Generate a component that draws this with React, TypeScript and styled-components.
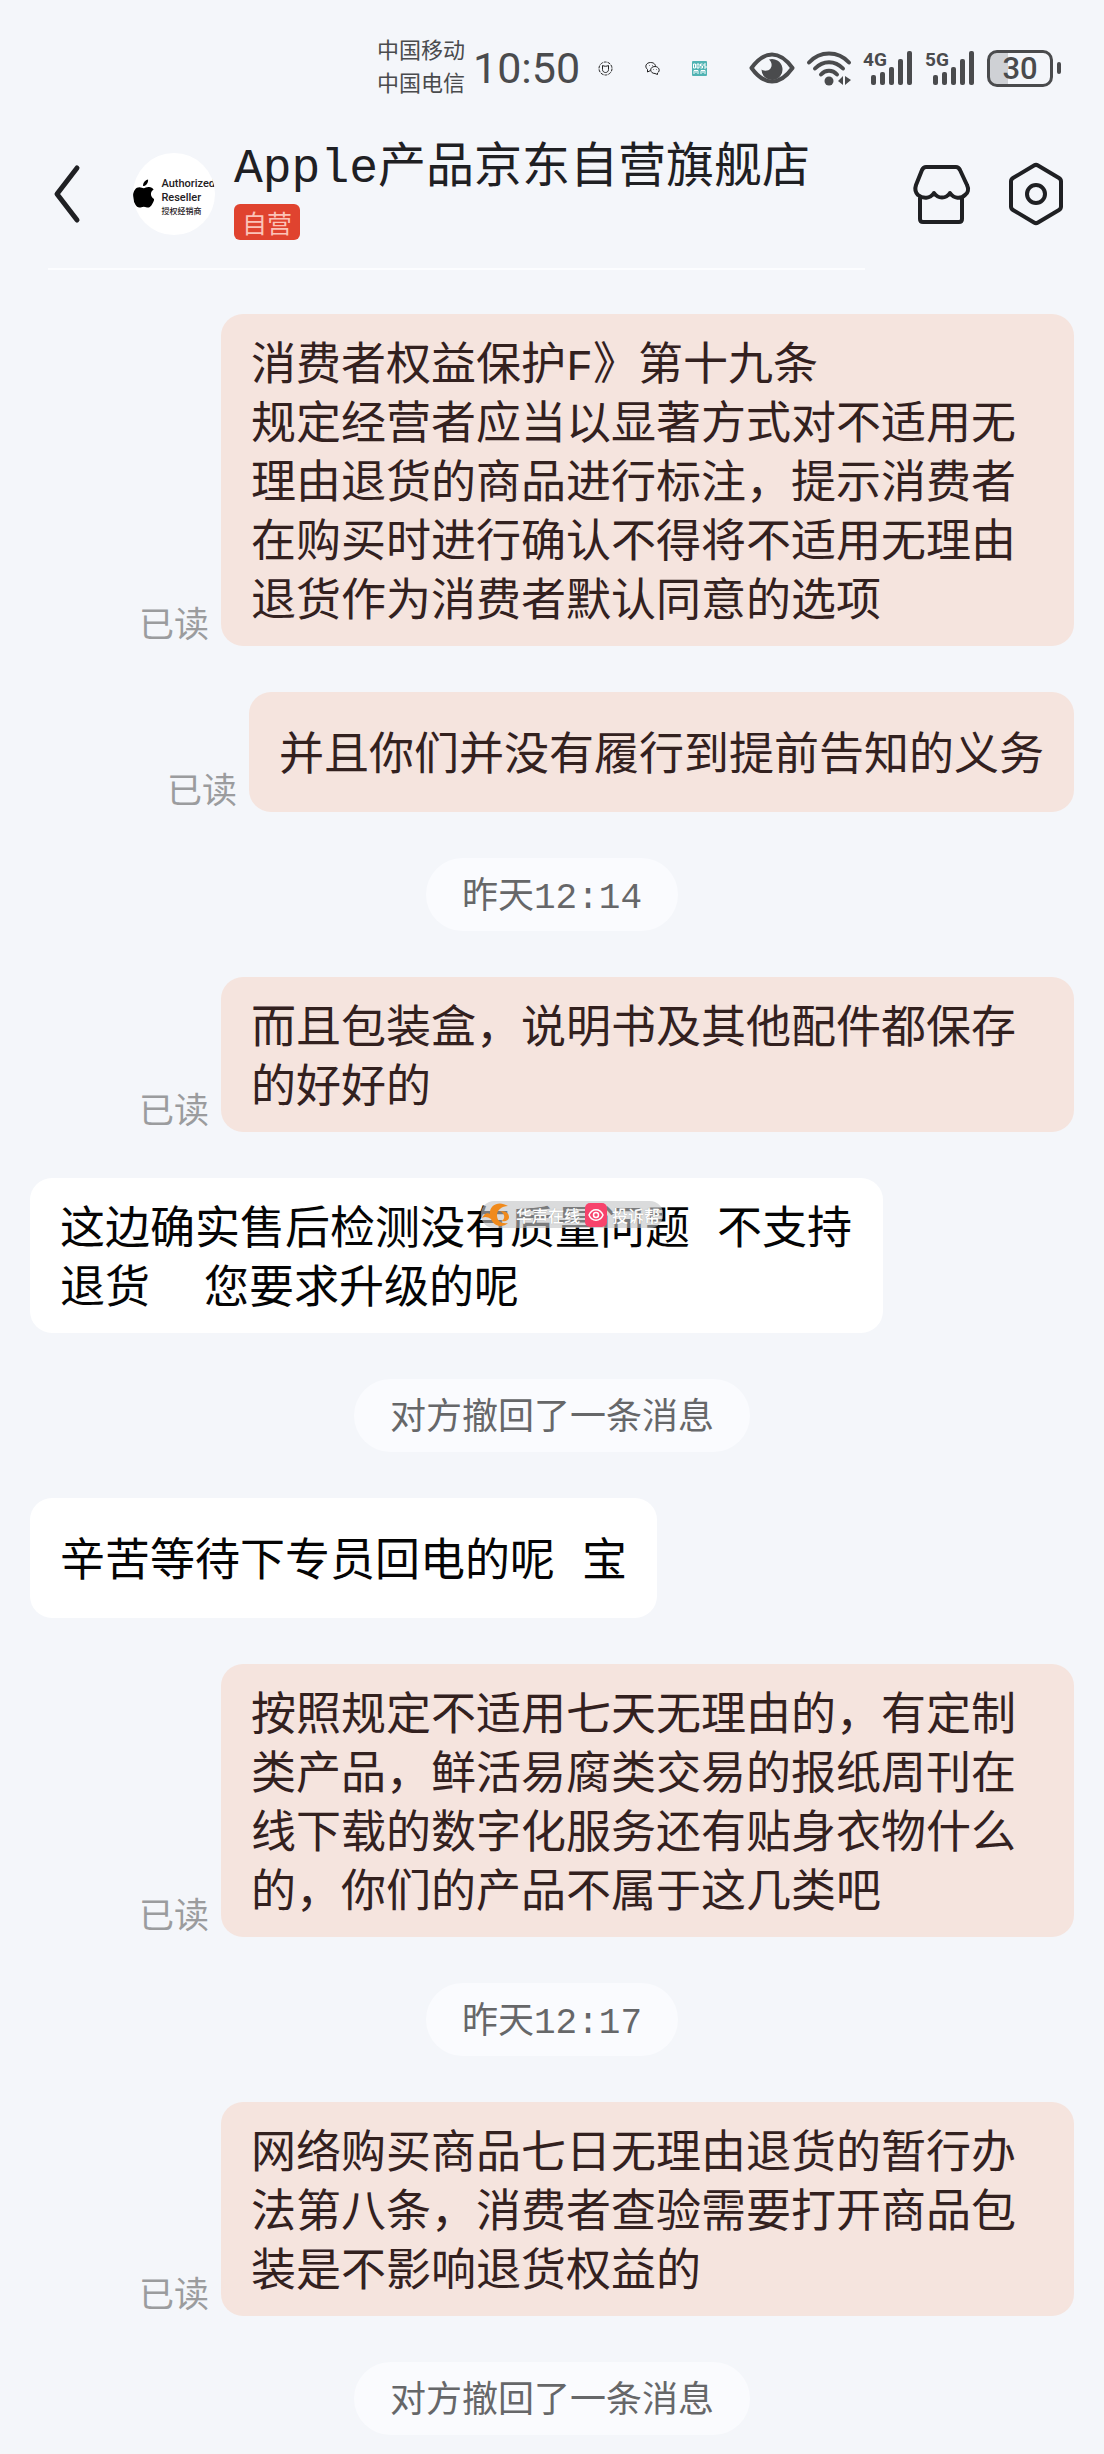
import React from "react";
import styled, { createGlobalStyle } from "styled-components";

const GlobalStyle = createGlobalStyle`
  *, *::before, *::after { box-sizing: border-box; }
  body {
    margin: 0;
    background: #f4f6fa;
    color: #1f2023;
    font-family: "Liberation Mono", "Noto Sans CJK SC", monospace;
  }
`;

const Page = styled.div`
  width: 100%;
  overflow: hidden;
`;

/* ---------- status bar ---------- */

const StatusBar = styled.div`
  display: flex;
  align-items: center;
  justify-content: flex-end;
  height: 120px;
  padding: 16px 43px 0 0;
  color: #4a4b4d;
`;

const Carriers = styled.div`
  display: flex;
  flex-direction: column;
  padding-bottom: 6px;
  font-family: "Noto Sans CJK SC", sans-serif;
  font-size: 22px;
  line-height: 33px;
  white-space: nowrap;
`;

const Clock = styled.time`
  margin-left: 8px;
  width: 108px;
  font-family: Roboto, sans-serif;
  font-size: 43px;
  font-weight: 400;
  line-height: 48px;
`;

const Notices = styled.div`
  display: flex;
  align-items: center;
  gap: 32px;
  margin: 0 42px 0 17px;
`;

const Indicators = styled.div`
  display: flex;
  align-items: center;
  gap: 11px;
`;

const SignalIcon = styled.svg`
  overflow: visible;
`;

const BatteryWrap = styled.div`
  display: flex;
  align-items: center;
  gap: 4px;
`;

const BatteryBody = styled.div`
  display: flex;
  align-items: center;
  justify-content: center;
  width: 66px;
  height: 37px;
  border: 3px solid #4a4b4d;
  border-radius: 10px;
  background: linear-gradient(90deg, #cfd1d5 30%, transparent 30%);
  font-family: Roboto, sans-serif;
  font-size: 31px;
  font-weight: 500;
  line-height: 31px;
`;

const BatteryTip = styled.span`
  width: 4px;
  height: 12px;
  border-radius: 2px;
  background: #4a4b4d;
`;

/* ---------- header ---------- */

const Header = styled.header`
  display: flex;
  align-items: center;
  height: 148px;
  padding: 0 41px 0 52px;
`;

const IconButton = styled.button`
  display: flex;
  padding: 0;
  border: 0;
  background: none;
  color: #1f2023;
  cursor: pointer;
`;

const Avatar = styled.div`
  display: flex;
  flex: none;
  align-items: center;
  gap: 7px;
  width: 82px;
  height: 82px;
  margin-left: 51px;
  border-radius: 50%;
  background: #fff;
  overflow: hidden;
`;

const AvatarText = styled.div`
  padding-top: 8px;
  font-family: Roboto, "Noto Sans CJK SC", sans-serif;
  font-size: 11px;
  font-weight: 500;
  line-height: 14px;
  white-space: nowrap;
`;

const AvatarNote = styled.div`
  font-size: 8px;
`;

const Shop = styled.div`
  display: flex;
  flex: 1;
  flex-direction: column;
  align-items: flex-start;
  gap: 7px;
  min-width: 0;
  padding: 0 0 14px 19px;
`;

const ShopName = styled.h1`
  margin: 0;
  padding-top: 7px;
  font-size: 48px;
  font-weight: 400;
  line-height: 56px;
  white-space: nowrap;
`;

const ShopBadge = styled.span`
  padding: 1px 8px 0;
  border-radius: 6px;
  background: #e0432f;
  color: #fbc3b8;
  font-family: "Noto Sans CJK SC", sans-serif;
  font-size: 25px;
  line-height: 35px;
`;

const Actions = styled.div`
  display: flex;
  align-items: center;
  gap: 38px;
`;

const Divider = styled.div`
  width: 74%;
  height: 2px;
  margin-left: 48px;
  background: #fcfdff;
`;

/* ---------- chat ---------- */

const Chat = styled.main`
  display: flex;
  flex-direction: column;
  gap: 46px;
  padding: 44px 30px 15px;
`;

const Row = styled.div<{ $sent?: boolean }>`
  display: flex;
  align-items: flex-end;
  justify-content: ${(p) => (p.$sent ? "flex-end" : "flex-start")};
  gap: 12px;
`;

const Bubble = styled.div<{ $sent?: boolean }>`
  position: relative;
  display: flex;
  align-items: center;
  max-width: 853px;
  min-width: 0;
  min-height: 120px;
  padding: 25px 30px 12px;
  border-radius: 22px;
  background: ${(p) => (p.$sent ? "#f5e4de" : "#ffffff")};
  color: ${(p) => (p.$sent ? "#33211f" : "#050505")};
  font-size: 45px;
  line-height: 59px;
`;

const BubbleText = styled.p`
  margin: 0;
  white-space: pre-wrap;
`;

const ReadMark = styled.span`
  flex: none;
  color: #9b9c9e;
  font-size: 35px;
  line-height: 36px;
`;

const Notice = styled.div`
  align-self: center;
  padding: 8px 36px 0;
  border-radius: 37px;
  background: #fafbfe;
  color: #666769;
  font-size: 36px;
  line-height: 65px;
`;

const Stamp = styled.div`
  position: absolute;
  top: 23px;
  left: 451px;
  display: flex;
  align-items: center;
  gap: 5px;
  height: 27px;
  padding: 0 3px 0 1px;
  border-radius: 13px;
  background: rgba(196, 197, 199, 0.62);
  color: #fff;
  font-family: "Noto Sans CJK SC", sans-serif;
  font-size: 16px;
  font-weight: 500;
  line-height: 18px;
  text-shadow: 0 0 1px #999;
  white-space: nowrap;
`;

const INK = "#4a4b4d";

function Signal({ label }: { label: string }) {
  const tops = [24, 21, 16, 8, 0];
  return (
    <SignalIcon width="51" height="34" viewBox="0 0 51 34" role="img" aria-label={label}>
      <text x="0" y="15" fontFamily="Roboto, sans-serif" fontWeight="700" fontSize="19" fill={INK}>
        {label}
      </text>
      {tops.map((top, i) => (
        <rect key={top} x={8 + i * 9} y={top} width="5" height={34 - top} rx="2" fill={INK} />
      ))}
    </SignalIcon>
  );
}

function Eye() {
  return (
    <svg width="46" height="32" viewBox="0 0 46 32" aria-hidden="true">
      <path d="M2.500 16C9 7 15.500 2.500 23 2.500S37 7 43.500 16C37 25 30.500 29.500 23 29.500S9 25 2.500 16Z" fill="none" stroke={INK} strokeWidth="4" strokeLinejoin="round" />
      <path d="M20 7.500a10.500 10.500 0 1 1-7.500 10c3 2 7 1.500 9-1 2-2.700 1.300-6.500-1.500-9Z" fill={INK} />
    </svg>
  );
}

function Wifi() {
  return (
    <svg width="46" height="35" viewBox="0 0 46 35" aria-hidden="true">
      <g fill="none" stroke={INK} strokeWidth="4" strokeLinecap="round">
        <path d="M3 11.500C14-.5 32-.5 43 11.500" />
        <path d="M9 17.500c8-8.500 20-8.500 28 0" />
        <path d="M15 23.500c4.500-5 11.500-5 16 0" />
      </g>
      <circle cx="23" cy="30" r="4.500" fill={INK} />
      <path d="M37 25v9l-5-4ZM39 25v9l6-5Z" fill={INK} />
    </svg>
  );
}

function RingNotice() {
  return (
    <svg width="15" height="15" viewBox="0 0 15 15" fill="none" stroke="#222" aria-hidden="true">
      <circle cx="7.500" cy="7.500" r="6.500" strokeDasharray="3 1" />
      <path d="M4.500 4.500v4c0 4 6 4 6 0v-4M4.500 4.500c2 1 4 1 6 0" />
    </svg>
  );
}

function ChatNotice() {
  return (
    <svg width="15" height="15" viewBox="0 0 15 15" fill="none" stroke="#222" aria-hidden="true">
      <path d="M5.500 9.500 2.500 11V8.500C-1 5.500 1.500 1.500 5.500 1.500s5 2.500 5 4" />
      <path d="M10 5.500c-6 0-5.500 7 0 7l2.500 1v-1.500c3.500-2.500 1-6.500-2.500-6.500Z" />
      <path d="M4 4.500h.5M7 4.500h.5M8.500 8.500h.5M11 8.500h.5" />
    </svg>
  );
}

function JobNotice() {
  return (
    <svg width="15" height="15" viewBox="0 0 15 15" aria-hidden="true">
      <rect width="15" height="15" rx="1" fill="#50b3b3" />
      <path d="M1.500 3h2v4h-2zM5 3h2v4H5zM10.500 3h-2v2h2v2h-2M14 3h-2v2h2v2h-2M2 13V9.500h4V13M9 13V9.500h4V13M4 9v3M11 9v3" fill="none" stroke="#fff" />
    </svg>
  );
}

function BackIcon() {
  return (
    <svg width="30" height="60" viewBox="0 0 30 60" fill="none" stroke="currentColor" strokeWidth="5" strokeLinecap="round" strokeLinejoin="round" aria-hidden="true">
      <path d="M25 4 5 30 25 56" />
    </svg>
  );
}

function StoreIcon() {
  return (
    <svg width="60" height="60" viewBox="0 0 60 60" fill="none" stroke="currentColor" strokeWidth="4" strokeLinecap="round" strokeLinejoin="round" aria-hidden="true">
      <path d="M15 3h30c2 0 3 1 4 3l7 15c2 4 1 8-2 10-4 4-11 4-15-2-4 6-12 6-16 0-4 6-11 6-16 2-3-3-3-7-2-10L11 6c1-2 2-3 4-3Z" />
      <path d="M9 34v21c0 2 1 3 3 3h36c2 0 3-1 3-3V34" />
    </svg>
  );
}

function SettingsIcon() {
  return (
    <svg width="54" height="64" viewBox="0 0 54 64" fill="none" stroke="currentColor" strokeWidth="4" strokeLinejoin="round" aria-hidden="true">
      <path d="M25 3.500 4 16c-1 .6-2 2-2 3.500v25c0 1.500 1 2.900 2 3.500l21 12.500c1.300.8 2.700.8 4 0L50 48c1-.6 2-2 2-3.500v-25c0-1.500-1-2.900-2-3.500L29 3.500c-1.300-.8-2.700-.8-4 0Z" />
      <circle cx="27" cy="32" r="9" />
    </svg>
  );
}

function AppleLogo() {
  return (
    <svg width="22" height="30" viewBox="0 0 22 30" fill="#000" aria-hidden="true">
      <path d="M15.500 0c.4 3.600-2.200 6.700-5.100 6.800C9.900 3.500 12.700.5 15.500 0Z" />
      <path d="M11 9c1.400 0 3-1.400 5.500-1.200 2 .1 3.700 1 4.700 2.500-4 2.500-3.500 8.200.8 9.900C20.500 24.600 18.200 29 15.500 29c-1.700 0-2.300-1-4.400-1s-2.800 1-4.400 1C3.400 29 0 23 0 17.300 0 11.500 3.200 8 6.500 8 8.600 8 9.700 9 11 9Z" />
    </svg>
  );
}

function Swirl() {
  return (
    <svg width="29" height="26" viewBox="0 0 29 26" aria-hidden="true">
      <path d="M26 4C17-2 7 3 8 12 5 10 2 12 0 16c3-2 6-1 9 1 3 8 12 9 17 4-7 1-11-2-11-8 0-5 5-9 11-9Z" fill="#f08a1c" />
      <path d="M18 9c7 0 9 3 9 6s-3 5-8 4c4-1 5-7-1-10Z" fill="#f08a1c" />
    </svg>
  );
}

function PinkEye() {
  return (
    <svg width="22" height="24" viewBox="0 0 22 24" aria-hidden="true">
      <rect width="22" height="24" rx="5" fill="#f7436c" />
      <path d="M4 12c3-7 11-7 14 0-3 7-11 7-14 0Z" fill="none" stroke="#fff" strokeWidth="1.500" />
      <circle cx="11" cy="12" r="2.500" fill="none" stroke="#fff" strokeWidth="1.500" />
    </svg>
  );
}

type Item =
  | { kind: "sent"; text: string }
  | { kind: "received"; text: string; stamp?: boolean }
  | { kind: "notice"; text: string };

const items: Item[] = [
  {
    kind: "sent",
    text: "消费者权益保护F》第十九条\n规定经营者应当以显著方式对不适用无理由退货的商品进行标注，提示消费者在购买时进行确认不得将不适用无理由退货作为消费者默认同意的选项",
  },
  { kind: "sent", text: "并且你们并没有履行到提前告知的义务" },
  { kind: "notice", text: "昨天12:14" },
  { kind: "sent", text: "而且包装盒，说明书及其他配件都保存的好好的" },
  { kind: "received", text: "这边确实售后检测没有质量问题 不支持退货  您要求升级的呢", stamp: true },
  { kind: "notice", text: "对方撤回了一条消息" },
  { kind: "received", text: "辛苦等待下专员回电的呢 宝" },
  {
    kind: "sent",
    text: "按照规定不适用七天无理由的，有定制类产品，鲜活易腐类交易的报纸周刊在线下载的数字化服务还有贴身衣物什么的，你们的产品不属于这几类吧",
  },
  { kind: "notice", text: "昨天12:17" },
  {
    kind: "sent",
    text: "网络购买商品七日无理由退货的暂行办法第八条，消费者查验需要打开商品包装是不影响退货权益的",
  },
  { kind: "notice", text: "对方撤回了一条消息" },
];

function ChatItem({ item }: { item: Item }) {
  if (item.kind === "notice") return <Notice>{item.text}</Notice>;
  const sent = item.kind === "sent";
  return (
    <Row $sent={sent}>
      {sent && <ReadMark>已读</ReadMark>}
      <Bubble $sent={sent}>
        <BubbleText>{item.text}</BubbleText>
        {item.kind === "received" && item.stamp && (
          <Stamp>
            <Swirl />
            <span>华声在线</span>
            <PinkEye />
            <span>投诉帮</span>
          </Stamp>
        )}
      </Bubble>
    </Row>
  );
}

export default function App() {
  return (
    <Page lang="zh-CN">
      <GlobalStyle />
      <StatusBar>
        <Carriers>
          <span>中国移动</span>
          <span>中国电信</span>
        </Carriers>
        <Clock>10:50</Clock>
        <Notices>
          <RingNotice />
          <ChatNotice />
          <JobNotice />
        </Notices>
        <Indicators>
          <Eye />
          <Wifi />
          <Signal label="4G" />
          <Signal label="5G" />
          <BatteryWrap>
            <BatteryBody>30</BatteryBody>
            <BatteryTip />
          </BatteryWrap>
        </Indicators>
      </StatusBar>
      <Header>
        <IconButton aria-label="返回">
          <BackIcon />
        </IconButton>
        <Avatar>
          <AppleLogo />
          <AvatarText>
            <div>Authorized</div>
            <div>Reseller</div>
            <AvatarNote>授权经销商</AvatarNote>
          </AvatarText>
        </Avatar>
        <Shop>
          <ShopName>Apple产品京东自营旗舰店</ShopName>
          <ShopBadge>自营</ShopBadge>
        </Shop>
        <Actions>
          <IconButton aria-label="店铺">
            <StoreIcon />
          </IconButton>
          <IconButton aria-label="设置">
            <SettingsIcon />
          </IconButton>
        </Actions>
      </Header>
      <Divider />
      <Chat>
        {items.map((item, i) => (
          <ChatItem key={i} item={item} />
        ))}
      </Chat>
    </Page>
  );
}
